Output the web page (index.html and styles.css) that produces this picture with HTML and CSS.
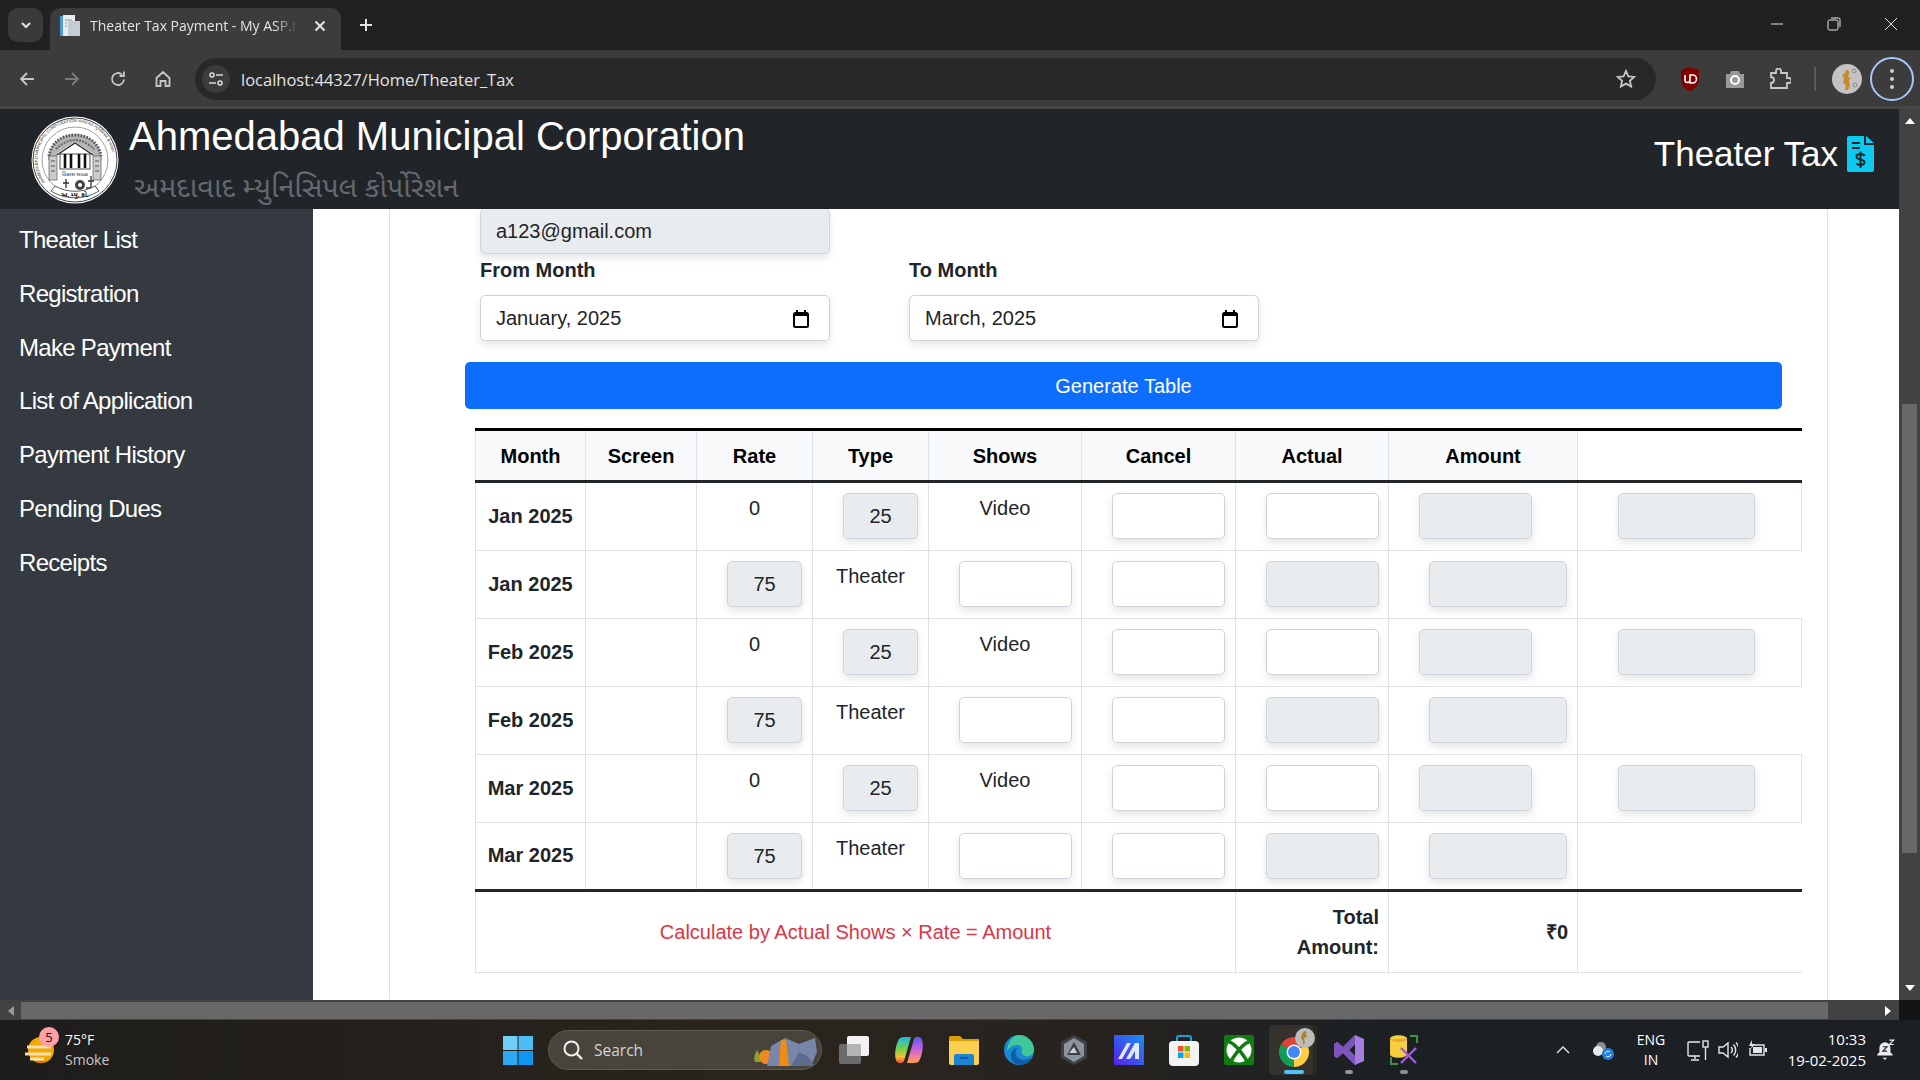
FILE: index.html
```html
<!DOCTYPE html>
<html lang="en">
<head>
    <meta charset="UTF-8">
    <title>Theater Tax Payment - My ASP.NET Application</title>
    <link rel="stylesheet" href="styles.css">
</head>
<body>
<div class="screen">

    <!-- browser tabs -->
    <div class="tabstrip">
        <div class="tab-search">
            <svg width="14" height="14" viewBox="0 0 14 14"><path d="M3 5l4 4 4-4" class="ico-line"/></svg>
        </div>
        <div class="tab">
            <svg width="20" height="22" viewBox="0 0 20 22">
                <rect x="0" y="1" width="5" height="20" fill="#4a9bd8"/>
                <rect x="3" y="0" width="12" height="21" fill="#e8edf2"/>
                <rect x="8" y="6" width="12" height="15" fill="#c4ccd4"/>
                <path d="M5 5h7M5 8h2M5 11h2" stroke="#8b95a0" fill="none"/>
            </svg>
            <span class="tab-title">Theater Tax Payment - My ASP.N</span>
            <svg class="tab-close" width="12" height="12" viewBox="0 0 12 12"><path d="M1.5 1.5l9 9M10.5 1.5l-9 9" class="ico-line"/></svg>
        </div>
        <svg class="tab-new" width="16" height="16" viewBox="0 0 16 16"><path d="M8 2v12M2 8h12" class="ico-line"/></svg>
        <div class="win-controls">
            <svg width="14" height="14" viewBox="0 0 14 14"><path d="M1 7h12" class="win-line"/></svg>
            <svg width="14" height="14" viewBox="0 0 14 14"><rect x="1" y="3" width="10" height="10" rx="1.5" class="win-line"/><path d="M4 1h7.5A1.5 1.5 0 0 1 13 2.500V10" class="win-line"/></svg>
            <svg width="14" height="14" viewBox="0 0 14 14"><path d="M1 1l12 12M13 1L1 13" class="win-line"/></svg>
        </div>
    </div>

    <!-- browser toolbar -->
    <div class="toolbar">
        <div class="nav-btns">
            <svg width="18" height="18" viewBox="0 0 18 18"><path d="M16 9H3M9 3L3 9l6 6" class="nav-line"/></svg>
            <svg class="dim" width="18" height="18" viewBox="0 0 18 18"><path d="M2 9h13M9 3l6 6-6 6" class="nav-line"/></svg>
            <svg width="18" height="18" viewBox="0 0 18 18"><path d="M15 9.500A6 6 0 1 1 13 4.500M15 1.500v4.500h-4.500" class="nav-line"/></svg>
            <svg width="18" height="18" viewBox="0 0 18 18"><path d="M2.500 8L9 2l6.500 6v8h-4v-5h-5v5h-4z" class="nav-line"/></svg>
        </div>
        <div class="omnibox">
            <div class="site-info">
                <svg width="16" height="16" viewBox="0 0 16 16"><circle cx="4" cy="4" r="2" class="thin-line"/><path d="M8 4h7M1 12h7" class="thin-line"/><circle cx="12" cy="12" r="2" class="thin-line"/></svg>
            </div>
            <span class="url">localhost:44327/Home/Theater_Tax</span>
            <svg class="star" width="20" height="20" viewBox="0 0 20 20"><path d="M10 2l2.400 5.300 5.800.6-4.300 3.900 1.200 5.700L10 14.600l-5.100 2.900 1.200-5.700L1.800 7.900l5.800-.6z" class="nav-line"/></svg>
        </div>
        <div class="ext-btns">
            <svg width="20" height="24" viewBox="0 0 20 24"><path d="M10 0l9 3v9c0 6-4 10-9 12C5 22 1 18 1 12V3z" fill="#800000"/><path d="M5 8v5a2.500 2.500 0 0 0 5 0V8M10 8h2.500a3 3 0 0 1 0 8H10z" stroke="#fff" stroke-width="1.600" fill="none"/></svg>
            <svg width="20" height="20" viewBox="0 0 20 20"><path d="M1 5h4l1-3h8l1 3h4v14H1z" fill="#9a9a9a"/><circle cx="10" cy="11" r="4" fill="none" stroke="#fff" stroke-width="2"/></svg>
            <svg width="22" height="22" viewBox="0 0 22 22"><path d="M2 5h5V3a2.500 2.500 0 0 1 5 0v2h6v5h2a2.500 2.500 0 0 1 0 5h-2v5H2v-5a3 3 0 0 0 0-6z" class="nav-line"/></svg>
            <div class="ext-sep"></div>
            <div class="avatar">
                <svg width="30" height="30" viewBox="0 0 30 30"><circle cx="15" cy="15" r="15" fill="#c3c3c3"/><path d="M14 6c3 0 4 2 3 4l-1 3 3 1-2 2 1 6-2 4h-3l1-5-3-2 1-5-2-3 3-2z" fill="#c98a2c"/><circle cx="22" cy="7" r="2" fill="none" stroke="#8a8a8a"/><circle cx="23" cy="21" r="2" fill="none" stroke="#8a8a8a"/></svg>
            </div>
            <div class="menu-btn">
                <svg width="6" height="22" viewBox="0 0 6 22"><circle cx="3" cy="3" r="2" fill="#cfcfcf"/><circle cx="3" cy="11" r="2" fill="#cfcfcf"/><circle cx="3" cy="19" r="2" fill="#cfcfcf"/></svg>
            </div>
        </div>
    </div>

    <!-- the site itself -->
    <div class="viewport">
        <div class="site">
            <header class="site-header">
                <svg class="seal" width="88" height="88" viewBox="0 0 88 88">
                    <defs>
                        <path id="sealRing" d="M14 66A37.500 37.500 0 1 1 74 66"/>
                    </defs>
                    <circle cx="44" cy="44" r="43.500" fill="#fff"/>
                    <circle cx="44" cy="44" r="42" fill="none" stroke="#444" stroke-width="1"/>
                    <circle cx="44" cy="44" r="33" fill="none" stroke="#777" stroke-width=".7"/>
                    <text class="seal-text"><textPath href="#sealRing">AHMEDABAD MUNICIPAL CORPORATION અમદાવાદ મ્યુનિસિપલ કોર્પોરેશન</textPath></text>
                    <!-- arches over the gate -->
                    <path d="M17 44c0-14 12-26 27-26s27 12 27 26h-7l-3-7-17-11-17 11-3 7z" fill="#b5b5b5"/>
                    <path d="M18 40c2-13 13-21 26-21s24 8 26 21" fill="none" stroke="#555" stroke-width="3" stroke-dasharray="1.500 1.500"/>
                    <path d="M25 33c5-5 12-9 19-9s14 4 19 9" fill="none" stroke="#666" stroke-width="2" stroke-dasharray="2 1.200"/>
                    <path d="M26 39l18-12 18 12" fill="none" stroke="#222" stroke-width="1.200"/>
                    <rect x="18" y="40" width="8" height="24" fill="#ccc" stroke="#444" stroke-width=".6"/>
                    <rect x="62" y="40" width="8" height="24" fill="#ccc" stroke="#444" stroke-width=".6"/>
                    <path d="M20 45h4M20 50h4M20 55h4M64 45h4M64 50h4M64 55h4" stroke="#555"/>
                    <rect x="29" y="38" width="30" height="15" fill="#fff" stroke="#222" stroke-width=".8"/>
                    <path d="M34 38v14M40 38v14M48 38v14M54 38v14" stroke="#111" stroke-width="2.600"/>
                    <text class="seal-motto" x="44" y="60">વિકાસ સાધક</text>
                    <circle cx="49" cy="69" r="5" fill="#444"/>
                    <circle cx="49" cy="69" r="2" fill="#fff"/>
                    <path d="M35 63v9M32 67h6M60 60v12M55 72h11M57 65h6" stroke="#333" stroke-width="1.300"/>
                    <path d="M20 75c15 9 33 9 48 0l-4-5c-12 7-28 7-40 0z" fill="#fff" stroke="#333" stroke-width=".8"/>
                    <text class="seal-ribbon" x="44" y="81">અ. મ્યુ. કો.</text>
                </svg>
                <div class="brand">
                    <h1 class="brand-name">Ahmedabad Municipal Corporation</h1>
                    <div class="brand-local">અમદાવાદ મ્યુનિસિપલ કોર્પોરેશન</div>
                </div>
                <div class="page-name">
                    <span>Theater Tax</span>
                    <svg width="27" height="36" viewBox="0 0 27 36">
                        <path d="M2 0h15v9h10v25a2 2 0 0 1-2 2H2a2 2 0 0 1-2-2V2a2 2 0 0 1 2-2z" fill="#0dcaf0"/>
                        <path d="M19 0l8 7h-8z" fill="#0dcaf0"/>
                        <path d="M5 7h8M5 12h8" stroke="#212529" stroke-width="2"/>
                        <path d="M17.500 20c-.5-1.500-2-2-4-2s-4 1-4 2.700 2 2.300 4 2.800 4 1.100 4 2.800-2 2.700-4 2.700-3.500-.6-4-2M13.500 15.500V32" stroke="#212529" stroke-width="2" fill="none"/>
                    </svg>
                </div>
            </header>

            <div class="site-body">
                <nav class="sidebar">
                    <a>Theater List</a>
                    <a>Registration</a>
                    <a>Make Payment</a>
                    <a>List of Application</a>
                    <a>Payment History</a>
                    <a>Pending Dues</a>
                    <a>Receipts</a>
                </nav>

                <main class="content">
                    <div class="content-box">
                        <div class="form-block">
                            <input class="field email-field locked" value="a123@gmail.com" readonly>
                            <div class="month-row">
                                <div class="month-col">
                                    <label class="field-label">From Month</label>
                                    <div class="field month-field">
                                        <span>January, 2025</span>
                                        <svg class="cal" width="16" height="18" viewBox="0 0 16 18"><path d="M4 0v3M12 0v3" stroke="#000" stroke-width="2"/><rect x="1" y="3" width="14" height="14" rx="1.500" fill="none" stroke="#000" stroke-width="2"/><rect x="1" y="3" width="14" height="3" fill="#000"/></svg>
                                    </div>
                                </div>
                                <div class="month-col">
                                    <label class="field-label">To Month</label>
                                    <div class="field month-field">
                                        <span>March, 2025</span>
                                        <svg class="cal" width="16" height="18" viewBox="0 0 16 18"><path d="M4 0v3M12 0v3" stroke="#000" stroke-width="2"/><rect x="1" y="3" width="14" height="14" rx="1.500" fill="none" stroke="#000" stroke-width="2"/><rect x="1" y="3" width="14" height="3" fill="#000"/></svg>
                                    </div>
                                </div>
                            </div>
                        </div>

                        <button class="generate-btn">Generate Table</button>

                        <table class="tax-table">
                            <colgroup>
                                <col class="c-month"><col class="c-screen"><col class="c-rate"><col class="c-type"><col class="c-shows"><col class="c-cancel"><col class="c-actual"><col class="c-amount"><col class="c-extra">
                            </colgroup>
                            <thead>
                                <tr>
                                    <th>Month</th><th>Screen</th><th>Rate</th><th>Type</th><th>Shows</th><th>Cancel</th><th>Actual</th><th>Amount</th><th class="blank"></th>
                                </tr>
                            </thead>
                            <tbody id="taxRows"></tbody>
                            <tfoot>
                                <tr>
                                    <td colspan="6" class="note">Calculate by Actual Shows × Rate = Amount</td>
                                    <td class="total-label">Total Amount:</td>
                                    <td class="total-value">₹0</td>
                                    <td class="no-edge"></td>
                                </tr>
                            </tfoot>
                        </table>
                    </div>
                </main>
            </div>
        </div>

        <div class="vscroll">
            <svg class="v-arrow" width="10" height="6" viewBox="0 0 10 6"><path d="M5 0l5 6H0z" fill="#fff"/></svg>
            <div class="v-thumb"></div>
            <svg class="v-arrow" width="10" height="6" viewBox="0 0 10 6"><path d="M5 6l5-6H0z" fill="#fff"/></svg>
        </div>
    </div>

    <div class="hscroll">
        <div class="h-end"><svg width="6" height="10" viewBox="0 0 6 10"><path d="M0 5l6-5v10z" fill="#9a9a9a"/></svg></div>
        <div class="h-thumb"></div>
        <div class="h-end h-right"><svg width="6" height="10" viewBox="0 0 6 10"><path d="M6 5L0 0v10z" fill="#fff"/></svg></div>
        <div class="h-corner"></div>
    </div>

    <!-- windows taskbar -->
    <div class="taskbar">
        <div class="weather">
            <svg class="weather-ico" width="30" height="30" viewBox="0 0 30 30">
                <circle cx="17" cy="15" r="13" fill="#f5a800"/>
                <path d="M10 26a13 13 0 0 0 14 0z" fill="#e07000"/>
                <path d="M3 12h24M1 19h26M6 24h14" stroke="#f3dfb0" stroke-width="3"/>
            </svg>
            <span class="weather-badge">5</span>
            <div class="weather-text">
                <span class="temp">75°F</span>
                <span class="cond">Smoke</span>
            </div>
        </div>

        <svg class="start" width="30" height="29" viewBox="0 0 30 29">
            <rect width="14.500" height="14" fill="#6fd0f7"/>
            <rect x="15.500" width="14.500" height="14" fill="#4cbdf5"/>
            <rect y="15" width="14.500" height="14" fill="#2fa8f2"/>
            <rect x="15.500" y="15" width="14.500" height="14" fill="#1095f0"/>
        </svg>

        <div class="task-search">
            <svg width="22" height="22" viewBox="0 0 22 22"><circle cx="9.500" cy="9.500" r="7" fill="none" stroke="#f0f0f0" stroke-width="2"/><path d="M14.500 14.500l5.500 5.500" stroke="#f0f0f0" stroke-width="2.400"/></svg>
            <span>Search</span>
            <svg class="search-art" width="64" height="32" viewBox="0 0 64 32">
                <path d="M2 28c-2-4 0-8 2-12 3 4 4 8 3 12z" fill="#8aa02c"/>
                <circle cx="13" cy="23" r="7" fill="#f08a1e"/>
                <path d="M14 32l4-20 14-8 14 6 16-6 2 14-6 14z" fill="#7a86a8"/>
                <path d="M26 32l2-26h5l3 26z" fill="#f28c10"/>
                <path d="M38 32l8-14 8 4 8 10z" fill="#5d6b8f"/>
            </svg>
        </div>

        <div class="task-apps">
            <div class="app">
                <svg width="30" height="28" viewBox="0 0 30 28"><rect x="0" y="8" width="22" height="20" rx="2" fill="#6b6b6b"/><rect x="8" y="0" width="22" height="20" rx="2" fill="#f2f2f2"/><rect x="8" y="8" width="14" height="12" fill="#b5b5b5"/></svg>
            </div>
            <div class="app">
                <svg width="28" height="30" viewBox="0 0 28 30">
                    <defs>
                        <linearGradient id="copA" x1="0" y1="0" x2="0" y2="1"><stop offset="0" stop-color="#1fb6e8"/><stop offset=".45" stop-color="#6fd24a"/><stop offset=".75" stop-color="#f5c030"/><stop offset="1" stop-color="#f04f3a"/></linearGradient>
                        <linearGradient id="copB" x1="0" y1="0" x2="0" y2="1"><stop offset="0" stop-color="#5b5ee8"/><stop offset=".45" stop-color="#c05fe0"/><stop offset=".75" stop-color="#f47fa0"/><stop offset="1" stop-color="#f7a03a"/></linearGradient>
                    </defs>
                    <path d="M9 2h7L9 26c-1 3-7 3-8-1-2-5 0-15 2-19 1-3 3-4 6-4z" fill="url(#copA)"/>
                    <path d="M19 28h-7l7-24c1-3 7-3 8 1 2 5 0 15-2 19-1 3-3 4-6 4z" fill="url(#copB)"/>
                </svg>
            </div>
            <div class="app">
                <svg width="30" height="30" viewBox="0 0 30 30"><path d="M0 3a2 2 0 0 1 2-2h9l3 3h16v4H0z" fill="#d9a008"/><path d="M0 6h30v22a2 2 0 0 1-2 2H2a2 2 0 0 1-2-2z" fill="#fcd04f"/><path d="M5 21a2 2 0 0 1 2-2h16a2 2 0 0 1 2 2v9H5z" fill="#1a83d4"/><path d="M11 23h8" stroke="#0b4f8a" stroke-width="1.500"/></svg>
            </div>
            <div class="app">
                <svg width="30" height="30" viewBox="0 0 30 30"><circle cx="15" cy="15" r="15" fill="#1a8ad4"/><path d="M15 0a15 15 0 0 1 15 15c0 5-5 7-9 6-3-1-4-3-3-6 1-2-1-5-5-5-5 0-8 3-10 6C4 7 9 0 15 0z" fill="#41c89a"/><path d="M29 22c-2 5-8 8-13 8-6 0-10-6-9-12 1-3 4-5 7-5-3 2-3 6-1 9 3 4 11 3 16 0z" fill="#0f5fa8"/></svg>
            </div>
            <div class="app">
                <svg width="26" height="30" viewBox="0 0 26 30"><path d="M13 0l13 7v16l-13 7L0 23V7z" fill="#3c4148"/><path d="M13 3l10 6v12l-10 6-10-6V9z" fill="#8c939b"/><path d="M13 7l7 13H6z" fill="#3c4148"/><path d="M13 12l3 6H8z" fill="#cfd3d8"/></svg>
            </div>
            <div class="app">
                <svg width="30" height="30" viewBox="0 0 30 30"><defs><linearGradient id="maG" x1="0" y1="1" x2="1" y2="0"><stop offset="0" stop-color="#5a1fe8"/><stop offset="1" stop-color="#1492f5"/></linearGradient></defs><rect width="30" height="30" fill="url(#maG)"/><path d="M4 24L13 8h4L8 24zM12 24l9-16h4v16h-4v-8l-5 8z" fill="#e6e6fa"/></svg>
            </div>
            <div class="app">
                <svg width="30" height="32" viewBox="0 0 30 32"><path d="M8 8V4a2 2 0 0 1 2-2h10a2 2 0 0 1 2 2v4" fill="none" stroke="#1ba1e2" stroke-width="2"/><rect y="7" width="30" height="25" rx="4" fill="#f3f3f3"/><rect x="9" y="12" width="5.500" height="5.500" fill="#f25022"/><rect x="15.500" y="12" width="5.500" height="5.500" fill="#7fba00"/><rect x="9" y="18.500" width="5.500" height="5.500" fill="#00a4ef"/><rect x="15.500" y="18.500" width="5.500" height="5.500" fill="#ffb900"/></svg>
            </div>
            <div class="app">
                <svg width="30" height="30" viewBox="0 0 30 30"><rect width="30" height="30" rx="2" fill="#107c10"/><circle cx="15" cy="15" r="12.500" fill="#fff"/><path d="M5 7C10 8 16 15 23 26M25 7C20 8 14 15 7 26" fill="none" stroke="#107c10" stroke-width="3.500"/></svg>
            </div>
            <div class="app app-active">
                <div class="chrome-plate"></div>
                <svg class="chrome-ico" width="40" height="44" viewBox="0 0 40 44">
                    <path d="M2 19.500a15 15 0 0 1 26 0L15 27z" fill="#db4437"/>
                    <path d="M2 19.500a15 15 0 0 0 13 22.500l0-15z" fill="#0f9d58"/>
                    <path d="M15 42a15 15 0 0 0 13-22.500L15 27z" fill="#ffcd40"/>
                    <circle cx="15" cy="27" r="7.500" fill="#fff"/>
                    <circle cx="15" cy="27" r="6" fill="#4285f4"/>
                    <circle cx="26" cy="13" r="10" fill="#bcbcbc"/>
                    <path d="M25 6c3 0 3 2 2 3l1 3-3 1 1 5-2 2 0-4-2-3 1-4z" fill="#b8802a"/>
                </svg>
                <div class="app-mark active-mark"></div>
            </div>
            <div class="app">
                <svg width="30" height="30" viewBox="0 0 30 30"><path d="M21 0l9 4v22l-9 4-12-12-6 5-3-2V9l3-2 6 5zM21 9l-6 6 6 6z" fill="#a47fe0"/><path d="M21 0L9 12 3 7 0 9v12l3 2 6-5 12 12-0-9-6-6 6-6z" fill="#7b55bb"/></svg>
                <div class="app-mark"></div>
            </div>
            <div class="app">
                <svg width="28" height="30" viewBox="0 0 28 30"><path d="M0 4c0-5 17-5 17 0v15c0 5-17 5-17 0z" fill="#f5cf3d"/><path d="M0 4c0 4 17 4 17 0" fill="#e8a93a"/><path d="M20 1h7v7M1 29h0M1 22v7h7" stroke="#3f9142" stroke-width="2" fill="none"/><path d="M11 13l15 15M26 13L11 28" stroke="#9b5fd0" stroke-width="2.400"/></svg>
                <div class="app-mark"></div>
            </div>
        </div>

        <div class="tray">
            <svg class="tray-caret" width="16" height="10" viewBox="0 0 16 10"><path d="M2 8l6-6 6 6" class="tray-line"/></svg>
            <svg class="tray-cloud" width="22" height="18" viewBox="0 0 22 18"><circle cx="9" cy="5" r="5" fill="#8a8f94"/><circle cx="6" cy="9" r="5" fill="#e8e8e8"/><circle cx="16" cy="12" r="6" fill="#1f7fe0"/><path d="M13 12a3 3 0 0 1 5-2M19 12a3 3 0 0 1-5 2" stroke="#fff" fill="none"/></svg>
            <div class="lang"><span>ENG</span><span>IN</span></div>
            <svg class="tray-net" width="22" height="21" viewBox="0 0 22 21"><path d="M13 2H2a1 1 0 0 0-1 1v12a1 1 0 0 0 1 1h11M8 16v3M4 20h8" class="tray-line"/><rect x="16" y="1" width="5" height="6" class="tray-line"/><path d="M18.500 7v13" class="tray-line"/></svg>
            <svg class="tray-vol" width="20" height="18" viewBox="0 0 20 18"><path d="M1 6h4l5-4v14l-5-4H1zM13 6a4 4 0 0 1 0 6M15.500 3.500a8 8 0 0 1 0 11M18 1.500a11 11 0 0 1 0 15" class="tray-line"/></svg>
            <svg class="tray-batt" width="20" height="18" viewBox="0 0 20 18"><path d="M3 5h13v10H2V8" class="tray-line"/><path d="M5 7h9v6H5z" fill="#e6e6e6"/><path d="M17 8h2v4h-2z" fill="#e6e6e6"/><path d="M4 0L1 6h3L2 10l5-6H4z" fill="#e6e6e6"/></svg>
            <div class="clock"><span>10:33</span><span>19-02-2025</span></div>
            <svg class="tray-bell" width="20" height="22" viewBox="0 0 18 20"><path d="M8 3a5 5 0 0 0-5 5v4l-2 2v1h14v-1l-2-2V8a5 5 0 0 0-5-5zM6 17h4l-2 2z" fill="#eee"/><path d="M6 7h4L6 11h4" stroke="#222" fill="none"/><path d="M12 1h4l-4 4h4" stroke="#eee" fill="none"/></svg>
        </div>
    </div>
</div>

<script>
    // rows repeat: a video line and a theater line for every month
    const months = ['Jan 2025', 'Feb 2025', 'Mar 2025'];
    const taxRows = document.getElementById('taxRows');

    months.forEach(month => {
        const video = document.createElement('tr');
        video.innerHTML = `<th class="month-cell">${month}</th><td></td>
            <td class="plain">0</td>
            <td><input class="cell-input rate-input locked" value="25" readonly></td>
            <td class="plain">Video</td>
            <td><input class="cell-input"></td>
            <td><input class="cell-input"></td>
            <td class="fit-left"><input class="cell-input locked" readonly></td>
            <td class="fit-extra"><input class="wide-input locked" readonly></td>`;
        taxRows.appendChild(video);

        const theater = document.createElement('tr');
        theater.innerHTML = `<th class="month-cell">${month}</th><td></td>
            <td><input class="cell-input rate-input locked" value="75" readonly></td>
            <td class="plain">Theater</td>
            <td><input class="cell-input"></td>
            <td><input class="cell-input"></td>
            <td><input class="cell-input locked" readonly></td>
            <td><input class="wide-input locked" readonly></td>
            <td class="no-edge"></td>`;
        taxRows.appendChild(theater);
    });
</script>
</body>
</html>
```

FILE: styles.css
```css
* {
    box-sizing: border-box;
}

html, body {
    margin: 0;
    height: 100%;
    overflow: hidden;
    background-color: #000;
}

body {
    font-family: "Liberation Sans", Arial, sans-serif;
    font-size: 20px;
    color: #212529;
}

.screen {
    width: 1920px;
    height: 1080px;
    display: flex;
    flex-direction: column;
}

.ico-line {
    fill: none;
    stroke: #e3e3e3;
    stroke-width: 2;
}

.win-line {
    fill: none;
    stroke: #e6e6e6;
    stroke-width: 1;
}

.nav-line {
    fill: none;
    stroke: #c7c7c7;
    stroke-width: 1.8;
}

.thin-line {
    fill: none;
    stroke: #dcdcdc;
    stroke-width: 1.5;
}

.tray-line {
    fill: none;
    stroke: #e6e6e6;
    stroke-width: 1.4;
}

/* browser tabs */
.tabstrip {
    height: 50px;
    background-color: #202221;
    display: flex;
    align-items: flex-end;
    padding-left: 8px;
    position: relative;
}

.tab-search {
    width: 35px;
    height: 34px;
    margin-bottom: 8px;
    background-color: #3a3a3a;
    border-radius: 10px;
    display: flex;
    align-items: center;
    justify-content: center;
}

.tab {
    width: 291px;
    height: 42px;
    margin-left: 7px;
    background-color: #3c3c3c;
    border-radius: 10px 10px 0 0;
    display: flex;
    align-items: center;
    padding: 0 15px 7px 10px;
    font-family: "Open Sans", sans-serif;
    font-size: 14px;
    color: #e3e3e3;
}

.tab-title {
    margin-left: 10px;
    width: 214px;
    white-space: nowrap;
    -webkit-mask-image: linear-gradient(90deg, #000 86%, transparent 97%);
    mask-image: linear-gradient(90deg, #000 86%, transparent 97%);
}

.tab-close {
    margin-left: 10px;
}

.tab-new {
    margin: 0 0 17px 17px;
}

.win-controls {
    margin-left: auto;
    margin-bottom: 19px;
    margin-right: 22px;
    display: flex;
    gap: 43px;
}

/* browser toolbar */
.toolbar {
    height: 59px;
    background-color: #3c3c3c;
    border-bottom: 3px solid #464646;
    display: flex;
    align-items: center;
    padding: 2px 6px 0 18px;
}

.nav-btns {
    display: flex;
    gap: 27.300px;
    width: 177px;
    flex: none;
}

.nav-btns .dim {
    opacity: .45;
}

.omnibox {
    width: 1461px;
    height: 42px;
    flex: none;
    background-color: #282828;
    border-radius: 21px;
    display: flex;
    align-items: center;
    padding: 0 20px 0 7px;
}

.site-info {
    width: 28px;
    height: 28px;
    border-radius: 50%;
    background-color: #3c3c3c;
    display: flex;
    align-items: center;
    justify-content: center;
}

.url {
    margin-left: 11px;
    font-family: "Open Sans", sans-serif;
    font-size: 16.500px;
    color: #e3e3e3;
    white-space: nowrap;
}

.star {
    margin-left: auto;
}

.ext-btns {
    flex: 1;
    display: flex;
    align-items: center;
    padding-left: 24px;
}

.ext-btns > svg:nth-child(2) {
    margin-left: 25px;
}

.ext-btns > svg:nth-child(3) {
    margin-left: 24px;
}

.ext-sep {
    width: 2px;
    height: 24px;
    margin-left: 23px;
    background-color: #5a5a5a;
}

.avatar {
    margin-left: 16px;
    height: 30px;
}

.menu-btn {
    width: 44px;
    height: 44px;
    margin-left: 8px;
    flex: none;
    border: 2px solid #a8c7fa;
    border-radius: 50%;
    display: flex;
    align-items: center;
    justify-content: center;
}

/* site */
.viewport {
    height: 891px;
    display: flex;
}

.site {
    width: 1899px;
    display: flex;
    flex-direction: column;
}

.site-header {
    height: 100px;
    background-color: #212529;
    display: flex;
    position: relative;
    z-index: 1;
    padding: 7px 25px 0 31px;
}

.seal {
    flex: none;
}

.seal-text {
    font-family: "Liberation Sans", "Noto Sans Gujarati", sans-serif;
    font-size: 4.300px;
    fill: #333;
}

.seal-motto {
    font-family: "Noto Sans Gujarati", sans-serif;
    font-size: 5.500px;
    text-anchor: middle;
    fill: #222;
}

.seal-ribbon {
    font-family: "Noto Sans Gujarati", sans-serif;
    font-size: 6.500px;
    font-weight: 700;
    text-anchor: middle;
    fill: #111;
}

.brand {
    margin-left: 10px;
    margin-top: -4px;
}

.brand-name {
    margin: 0;
    font-size: 40px;
    font-weight: 400;
    line-height: 48px;
    color: #fff;
}

.brand-local {
    margin-top: 14px;
    margin-left: 5px;
    font-family: "Noto Sans Gujarati", "Noto Sans", "DejaVu Sans", sans-serif;
    font-size: 28.700px;
    line-height: 32px;
    color: #62696f;
    white-space: nowrap;
}

.page-name {
    margin-left: auto;
    margin-top: 15.500px;
    height: 44px;
    display: flex;
    align-items: center;
    gap: 9px;
    font-size: 35px;
    color: #fff;
}

.site-body {
    flex: 1;
    display: flex;
    min-height: 0;
}

.sidebar {
    width: 313px;
    background-color: #343a40;
    display: flex;
    flex-direction: column;
    padding-top: 4px;
}

.sidebar a {
    height: 53.800px;
    padding-left: 19px;
    font-size: 24px;
    line-height: 54px;
    letter-spacing: -.7px;
    color: #fff;
}

.content {
    flex: 1;
    background-color: #fff;
    overflow: hidden;
    padding-left: 76px;
}

.content-box {
    width: 1439px;
    height: 100%;
    border-left: 1px solid #dee2e6;
    border-right: 1px solid #dee2e6;
    padding-left: 75px;
}

.form-block {
    padding-left: 15px;
}

.field {
    width: 350px;
    height: 46px;
    border: 1px solid #ced4da;
    border-radius: 5px;
    background-color: #fff;
    box-shadow: 0 4px 8px rgba(0, 0, 0, .1);
    font-family: inherit;
    font-size: 20px;
    color: #212529;
    padding: 1px 15px 0;
    display: block;
}

.locked {
    background-color: #e9ecef;
}

.email-field {
    margin-top: -1px;
}

.month-row {
    display: flex;
    gap: 79px;
}

.field-label {
    display: block;
    font-weight: 700;
    line-height: 30px;
    margin: 1px 0 10px;
}

.month-field {
    display: flex;
    align-items: center;
    justify-content: space-between;
    padding-right: 20px;
}

.generate-btn {
    display: block;
    width: 1317px;
    height: 47px;
    margin: 21px 0 19px;
    border: none;
    border-radius: 5px;
    background-color: #0d6efd;
    color: #fff;
    font-family: inherit;
    font-size: 20px;
    padding-top: 2px;
}

/* tax table */
.tax-table {
    width: 1326px;
    margin-left: 10px;
    table-layout: fixed;
    border-collapse: collapse;
}

.c-month { width: 110px; }
.c-screen { width: 111px; }
.c-rate { width: 116px; }
.c-type { width: 116px; }
.c-shows { width: 153px; }
.c-cancel { width: 154px; }
.c-actual { width: 153px; }
.c-amount { width: 189px; }
.c-extra { width: 224px; }

.tax-table th,
.tax-table td {
    border: 1px solid #dee2e6;
    padding: 10px;
    line-height: 30px;
    vertical-align: top;
}

.tax-table thead tr {
    height: 52px;
}

.tax-table thead th {
    border-top: 3px solid #000;
    border-bottom: 3px solid #212529;
    background-color: #f8f9fa;
    color: #000;
    text-align: center;
    padding: 8px;
    vertical-align: middle;
}

.tax-table thead th.blank {
    background-color: #fff;
    border-right: none;
}

.tax-table tbody tr {
    height: 68px;
}

.tax-table tbody tr:first-child {
    height: 69px;
}

.tax-table .month-cell {
    text-align: center;
    vertical-align: middle;
    padding: 0 0 2px;
}

.tax-table .plain {
    text-align: center;
}

.cell-input,
.wide-input {
    display: block;
    height: 46px;
    border: 1px solid #ced4da;
    border-radius: 5px;
    box-shadow: 0 4px 8px rgba(0, 0, 0, .1);
    font-family: inherit;
    font-size: 20px;
    color: #212529;
    text-align: center;
    padding: 0 5px;
    outline: none;
}

.cell-input {
    width: 113px;
    margin-left: 20px;
}

.wide-input {
    width: 138px;
    margin-left: 30px;
}

.rate-input {
    width: 75px;
    margin-left: 20px;
}

.fit-extra .wide-input {
    margin-left: 30px;
    width: 137px;
}

.tax-table .no-edge {
    border-right: none;
}

.tax-table tfoot tr {
    height: 81px;
}

.tax-table tfoot td {
    border-top: 3px solid #212529;
    vertical-align: middle;
}

.tax-table .note {
    color: #dc3545;
    text-align: center;
}

.tax-table .total-label,
.tax-table .total-value {
    font-weight: 700;
    text-align: right;
    padding-right: 9px;
}

/* scrollbars */
.vscroll {
    width: 21px;
    background-color: #424242;
    position: relative;
    display: flex;
    flex-direction: column;
    align-items: center;
    padding: 9px 0;
}

.v-thumb {
    width: 15px;
    height: 449px;
    margin-top: 280px;
    margin-bottom: auto;
    background-color: #686868;
}

.hscroll {
    height: 20px;
    background-color: #424242;
    display: flex;
    padding-top: 2px;
}

.h-end {
    width: 21px;
    display: flex;
    align-items: center;
    justify-content: center;
}

.h-thumb {
    width: 1807px;
    height: 17px;
    background-color: #686868;
}

.h-right {
    width: 71px;
    justify-content: flex-end;
    padding-right: 8px;
}

.h-corner {
    width: 21px;
    margin-top: -2px;
    background-color: #141414;
}

/* windows taskbar */
.taskbar {
    height: 60px;
    background: linear-gradient(90deg, #1e1d1b 0%, #2a241d 40%, #26231f 58%, #1c2024 72%, #1c2024 100%);
    display: flex;
    align-items: center;
    position: relative;
    color: #fff;
    font-family: "Open Sans", sans-serif;
}

.weather {
    width: 503px;
    height: 60px;
    display: flex;
    align-items: center;
    padding-left: 24px;
    position: relative;
}

.weather-badge {
    position: absolute;
    left: 39px;
    top: 7px;
    width: 20px;
    height: 20px;
    border-radius: 50%;
    background-color: #ffa0a8;
    color: #111;
    font-size: 13px;
    line-height: 20px;
    text-align: center;
}

.weather-text {
    margin-left: 11px;
    display: flex;
    flex-direction: column;
    font-size: 14px;
    line-height: 20px;
}

.cond {
    color: #c9c9c9;
}

.start {
    flex: none;
}

.task-search {
    width: 274px;
    height: 40px;
    margin-left: 15px;
    border-radius: 20px;
    border: 1px solid #5e5a50;
    background-color: #48443b;
    display: flex;
    align-items: center;
    padding-left: 13px;
    font-size: 15.500px;
    color: #d4d4d4;
    overflow: hidden;
}

.task-search span {
    margin-left: 10px;
}

.search-art {
    margin-left: auto;
    margin-right: 4px;
}

.task-apps {
    margin-left: 4.500px;
    display: flex;
    height: 60px;
}

.app {
    width: 55px;
    height: 60px;
    display: flex;
    align-items: center;
    justify-content: center;
    position: relative;
}

.app-mark {
    position: absolute;
    left: 23.500px;
    bottom: 6px;
    width: 8px;
    height: 4px;
    border-radius: 2px;
    background-color: #8f8f8f;
}

.chrome-plate {
    position: absolute;
    left: 2.500px;
    top: 5px;
    width: 44px;
    height: 50px;
    border-radius: 5px;
    background-color: #35322e;
    box-shadow: 4px 0 0 #2a2824;
}

.chrome-ico {
    position: absolute;
    left: 12.500px;
    top: 5px;
}

.active-mark {
    left: 17.500px;
    width: 20px;
    background-color: #4cc2ff;
}

.tray {
    position: absolute;
    left: 0;
    right: 0;
    top: 0;
    height: 60px;
    pointer-events: none;
}

.tray > * {
    position: absolute;
}

.tray-caret { left: 1555px; top: 25px; }
.tray-cloud { left: 1592px; top: 22px; }
.tray-net { left: 1687px; top: 20px; }
.tray-vol { left: 1718px; top: 21px; }
.tray-batt { left: 1748px; top: 20px; }
.tray-bell { left: 1876px; top: 19px; }

.lang {
    left: 1631px;
    top: 10px;
    width: 40px;
    display: flex;
    flex-direction: column;
    align-items: center;
    font-size: 14px;
    line-height: 20px;
}

.clock {
    left: 1746px;
    top: 9px;
    width: 120px;
    display: flex;
    flex-direction: column;
    align-items: flex-end;
    font-size: 15px;
    line-height: 21px;
}
```
